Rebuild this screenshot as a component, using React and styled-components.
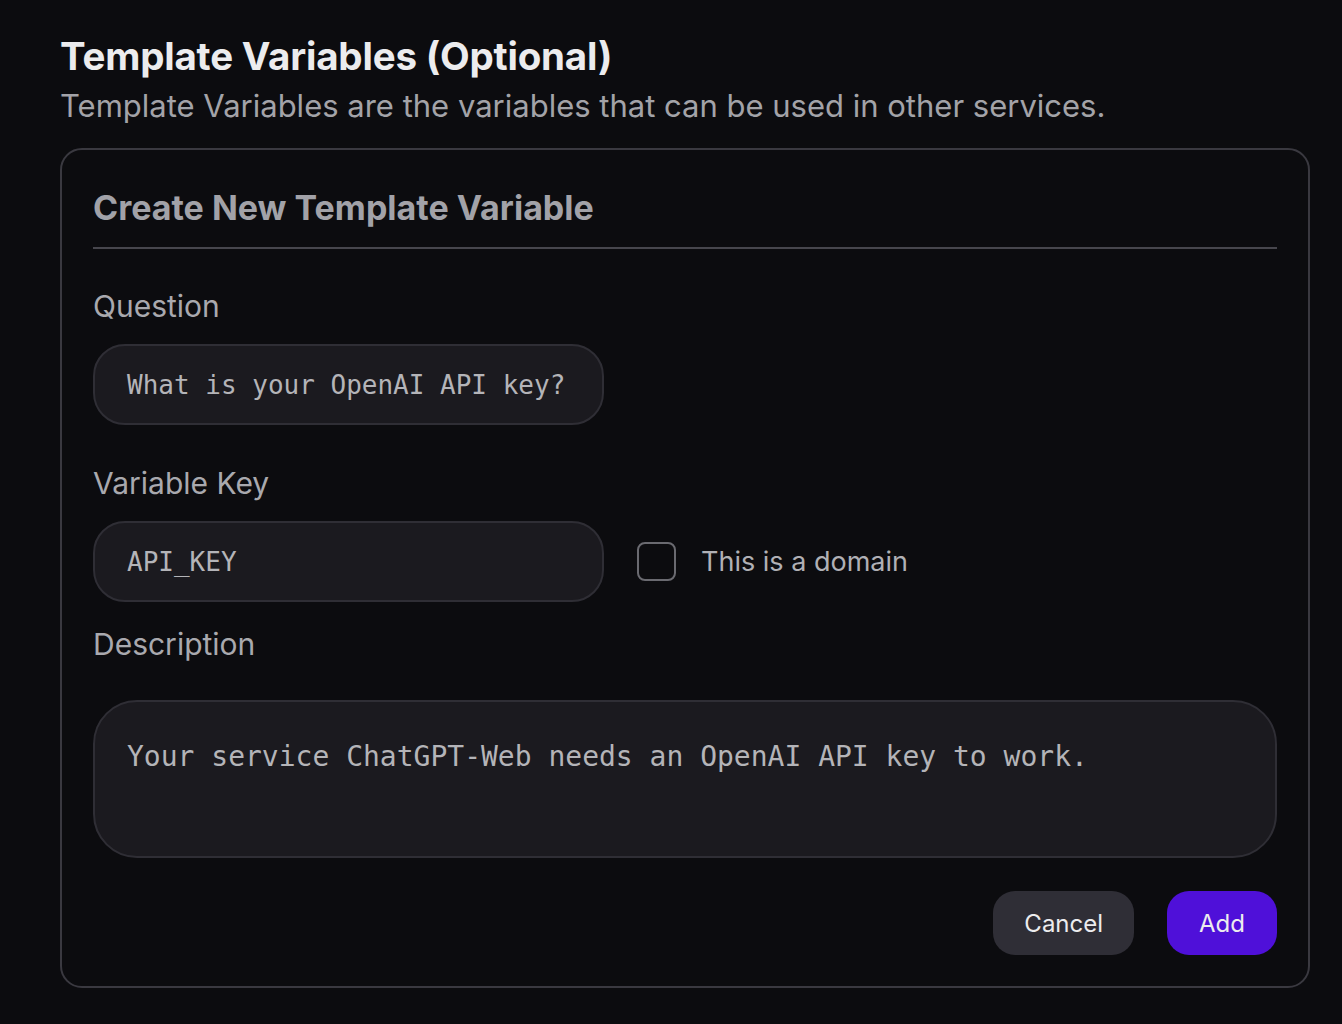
import styled, { createGlobalStyle } from 'styled-components';

const GlobalStyle = createGlobalStyle`
  body {
    margin: 0;
    background: #0c0c0f;
    font-family: Inter, "Noto Sans", sans-serif;
  }
`;

const Page = styled.div`
  padding: 30px 32px 36px 60px;
`;

const Title = styled.h1`
  margin: 0;
  font-size: 38.5px;
  line-height: 52px;
  font-weight: 700;
  color: #ececee;
  letter-spacing: -0.2px;
`;

const Subtitle = styled.p`
  margin: 0 0 18px;
  font-size: 31px;
  line-height: 48px;
  color: #a3a3a8;
`;

const Card = styled.section`
  border: 2px solid #3a3940;
  border-radius: 22px;
  padding: 34px 31px 31px;
`;

const CardTitle = styled.h2`
  margin: 0;
  padding-bottom: 15px;
  border-bottom: 2px solid #47464d;
  font-size: 34px;
  line-height: 48px;
  font-weight: 700;
  color: #a2a2a8;
`;

const Label = styled.label`
  display: block;
  font-size: 30px;
  line-height: 40px;
  color: #a9a9ae;
  margin: ${(p) => p.$top || 0}px 0 ${(p) => p.$bottom || 0}px;
`;

const Field = styled.div`
  box-sizing: border-box;
  display: flex;
  align-items: ${(p) => (p.$multiline ? 'flex-start' : 'center')};
  width: ${(p) => p.$width || '100%'};
  height: ${(p) => p.$height}px;
  padding: ${(p) => (p.$multiline ? '38px 32px' : '0 32px')};
  background: #1b1a1f;
  border: 2px solid #2f2e35;
  border-radius: ${(p) => (p.$multiline ? 44 : 32)}px;
  font-family: "DejaVu Sans Mono", "Liberation Mono", monospace;
  font-size: ${(p) => p.$size || 26}px;
  color: #b4b4b8;
`;

const KeyRow = styled.div`
  display: flex;
  align-items: center;
  gap: 33px;
`;

const CheckLabel = styled.label`
  display: flex;
  align-items: center;
  gap: 25px;
  font-size: 27px;
  color: #b0b0b5;
`;

const Box = styled.span`
  box-sizing: border-box;
  width: 39px;
  height: 39px;
  border: 2px solid #6a6a70;
  border-radius: 8px;
`;

const Actions = styled.div`
  display: flex;
  justify-content: flex-end;
  gap: 33px;
  margin-top: 33px;
`;

const Button = styled.button`
  height: 64px;
  padding: 0 ${(p) => (p.$primary ? 32 : 31)}px;
  border: none;
  border-radius: 22px;
  background: ${(p) => (p.$primary ? '#4f10d9' : '#2f2e36')};
  color: #ececee;
  font-family: Inter, "Noto Sans", sans-serif;
  font-size: 24px;
`;

export default function App() {
  return (
    <>
      <GlobalStyle />
      <Page>
        <Title>Template Variables (Optional)</Title>
        <Subtitle>Template Variables are the variables that can be used in other services.</Subtitle>
        <Card>
          <CardTitle>Create New Template Variable</CardTitle>
          <Label $top={37} $bottom={18}>Question</Label>
          <Field $width="511px" $height={81}>What is your OpenAI API key?</Field>
          <Label $top={38} $bottom={18}>Variable Key</Label>
          <KeyRow>
            <Field $width="511px" $height={81}>API_KEY</Field>
            <CheckLabel>
              <Box />
              This is a domain
            </CheckLabel>
          </KeyRow>
          <Label $top={22} $bottom={36}>Description</Label>
          <Field $multiline $height={158} $size={28}>
            Your service ChatGPT-Web needs an OpenAI API key to work.
          </Field>
          <Actions>
            <Button>Cancel</Button>
            <Button $primary>Add</Button>
          </Actions>
        </Card>
      </Page>
    </>
  );
}
